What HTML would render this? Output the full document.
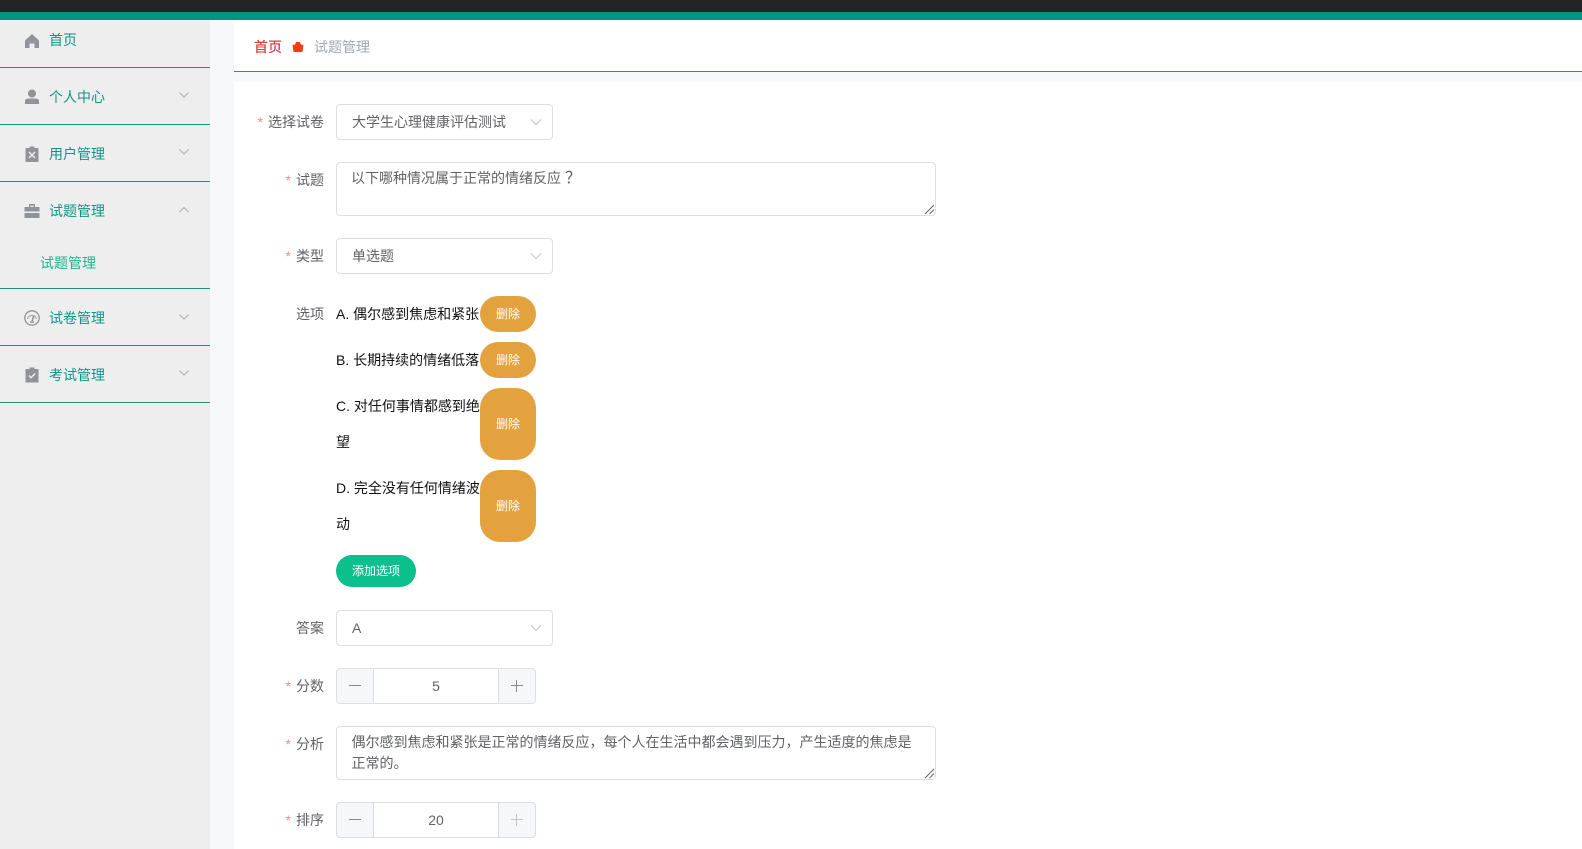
<!DOCTYPE html>
<html lang="zh-CN">
<head>
<meta charset="utf-8">
<title>试题管理</title>
<style>
html,body{margin:0;padding:0;background:#fff;}
body{width:1582px;height:849px;overflow:hidden;position:relative;font-family:"Liberation Sans","Noto Sans CJK SC",sans-serif;font-size:14px;color:#606266;}
.a{position:absolute;}
.t{position:absolute;white-space:nowrap;line-height:20px;height:20px;}
.menu{color:#0f9587;}
.hr{position:absolute;left:0;width:210px;height:1px;background:#1f8f7f;}
.lbl{position:absolute;right:1258px;white-space:nowrap;line-height:20px;height:20px;color:#606266;}
.lbl i{font-style:normal;color:#f08a8a;margin-right:5px;}
.box{position:absolute;box-sizing:border-box;border:1px solid #dcdfe6;border-radius:4px;background:#fff;}
.sel{left:336px;width:217px;height:36px;}
.sel span{position:absolute;left:15px;top:7px;line-height:20px;white-space:nowrap;}
.sel svg{position:absolute;right:10px;top:12px;}
.ta{left:336px;width:600px;height:54px;}
.ta svg{position:absolute;right:0;bottom:0;}
.opt{position:absolute;left:336px;width:144px;line-height:36px;color:#111;word-break:break-all;}
.del{position:absolute;left:480px;width:56px;background:#e4a23f;color:#fff;font-size:12px;text-align:center;border-radius:20px;}
.num{left:336px;width:200px;height:36px;}
.num b{position:absolute;top:0;height:34px;width:36px;background:#f5f7fa;}
.num b.m{left:0;border-right:1px solid #dcdfe6;border-radius:3px 0 0 3px;}
.num b.p{right:0;border-left:1px solid #dcdfe6;border-radius:0 3px 3px 0;}
.num b:before{content:"";position:absolute;left:12px;top:16px;width:12px;height:1px;background:#85888e;}
.num b.p:after{content:"";position:absolute;left:17px;top:11px;width:1px;height:12px;background:#85888e;}
.num b.d:before,.num b.d:after{background:#c0c4cc;}
.num span{position:absolute;left:37px;right:37px;top:7px;text-align:center;line-height:20px;}
</style>
</head>
<body>
<div class="a" style="left:0;top:0;width:1582px;height:12px;background:#232323"></div>
<div class="a" style="left:0;top:12px;width:1582px;height:8px;background:#069384"></div>

<!-- sidebar -->
<div class="a" style="left:0;top:20px;width:210px;height:829px;background:#eeeeee"></div>
<div class="a" style="left:210px;top:20px;width:24px;height:829px;background:#f6f8fa"></div>

<div class="hr" style="top:67px"></div>
<div class="hr" style="top:124px"></div>
<div class="hr" style="top:181px"></div>
<div class="hr" style="top:288px"></div>
<div class="hr" style="top:345px"></div>
<div class="hr" style="top:402px"></div>

<svg class="a" style="left:24px;top:33px" width="16" height="16" viewBox="0 0 16 16"><path fill="#909399" d="M8 1 L1 7.500 V15 H5.500 V10.500 H10.500 V15 H15 V7.500 Z"/></svg>
<div class="t menu" style="left:49px;top:30px">首页</div>

<svg class="a" style="left:24px;top:89px" width="16" height="16" viewBox="0 0 16 16"><circle cx="8" cy="4.500" r="4" fill="#909399"/><path fill="#909399" d="M1 15 V12.500 Q1 9.500 4 9.500 H12 Q15 9.500 15 12.500 V15 Z"/></svg>
<div class="t menu" style="left:49px;top:87px">个人中心</div>
<svg class="a" style="left:178px;top:91px" width="12" height="8" viewBox="0 0 12 8"><path d="M1.500 1.500 L6 6 L10.500 1.500" fill="none" stroke="#a8adb3" stroke-width="1"/></svg>

<svg class="a" style="left:25px;top:146px" width="14" height="16" viewBox="0 0 14 16"><path fill="#909399" fill-rule="evenodd" d="M0.500 2 H4.500 V0.500 H9.500 V2 H13.500 V16 H0.500 Z M3.500 6.500 L4.500 5.500 L7 8 L9.500 5.500 L10.500 6.500 L8 9 L10.500 11.500 L9.500 12.500 L7 10 L4.500 12.500 L3.500 11.500 L6 9 Z"/></svg>
<div class="t menu" style="left:49px;top:144px">用户管理</div>
<svg class="a" style="left:178px;top:148px" width="12" height="8" viewBox="0 0 12 8"><path d="M1.500 1.500 L6 6 L10.500 1.500" fill="none" stroke="#a8adb3" stroke-width="1"/></svg>

<svg class="a" style="left:24px;top:203px" width="16" height="16" viewBox="0 0 16 16"><path fill="#909399" fill-rule="evenodd" d="M5 4 V1 H11 V4 H15.500 V8.500 H0.500 V4 Z M6.500 2.500 V4 H9.500 V2.500 Z M0.500 10 H15.500 V15 H0.500 Z"/></svg>
<div class="t menu" style="left:49px;top:201px">试题管理</div>
<svg class="a" style="left:178px;top:206px" width="12" height="8" viewBox="0 0 12 8"><path d="M1.500 6 L6 1.500 L10.500 6" fill="none" stroke="#a8adb3" stroke-width="1"/></svg>

<div class="t" style="left:40px;top:253px;color:#1fb48c">试题管理</div>

<svg class="a" style="left:24px;top:310px" width="16" height="16" viewBox="0 0 16 16"><circle cx="8" cy="8" r="7.200" fill="none" stroke="#909399" stroke-width="1.300"/><path d="M3.500 9 A4.600 4.600 0 0 1 12.500 9" fill="none" stroke="#a9acb2" stroke-width="1.200"/><path d="M9.800 5.500 L8.200 11" stroke="#909399" stroke-width="1.500"/><path d="M6 12 H10" stroke="#909399" stroke-width="1.500"/></svg>
<div class="t menu" style="left:49px;top:308px">试卷管理</div>
<svg class="a" style="left:178px;top:313px" width="12" height="8" viewBox="0 0 12 8"><path d="M1.500 1.500 L6 6 L10.500 1.500" fill="none" stroke="#a8adb3" stroke-width="1"/></svg>

<svg class="a" style="left:25px;top:367px" width="14" height="16" viewBox="0 0 14 16"><path fill="#909399" fill-rule="evenodd" d="M0.500 2 H4.500 V0.500 H9.500 V2 H13.500 V15.500 H0.500 Z M3.500 9 L4.500 8 L6 9.800 L9.700 6 L10.700 7 L6 11.800 Z"/></svg>
<div class="t menu" style="left:49px;top:365px">考试管理</div>
<svg class="a" style="left:178px;top:369px" width="12" height="8" viewBox="0 0 12 8"><path d="M1.500 1.500 L6 6 L10.500 1.500" fill="none" stroke="#a8adb3" stroke-width="1"/></svg>

<!-- breadcrumb -->
<div class="a" style="left:234px;top:20px;width:1348px;height:51px;background:#fff"></div>
<div class="a" style="left:234px;top:71px;width:1348px;height:1px;background:#1f8f7f"></div>
<div class="a" style="left:234px;top:72px;width:1348px;height:10px;background:#f6f8fa"></div>
<div class="a" style="left:234px;top:82px;width:1348px;height:767px;background:#fff"></div>
<div class="t" style="left:254px;top:37px;color:#dc3f4a;font-weight:500">首页</div>
<svg class="a" style="left:292px;top:41px" width="12" height="12" viewBox="0 0 12 12"><path fill="#ee3f0c" d="M0.500 4 L3 3.500 L4.200 1 H7.800 L9 3.500 L11.500 4 L10.500 11 H1.500 Z"/></svg>
<div class="t" style="left:314px;top:37px;color:#a0a6b2">试题管理</div>

<!-- form -->
<div class="lbl" style="top:112px"><i>*</i>选择试卷</div>
<div class="box sel" style="top:104px"><span>大学生心理健康评估测试</span><svg width="12" height="10" viewBox="0 0 12 10"><path d="M1 2.500 L6 7.500 L11 2.500" fill="none" stroke="#c0c4cc" stroke-width="1"/></svg></div>

<div class="lbl" style="top:170px"><i>*</i>试题</div>
<div class="box ta" style="top:162px"><div class="t" style="left:14px;top:5px">以下哪种情况属于正常的情绪反应<span style="position:relative;left:4px;font-size:16px">？</span></div><svg width="12" height="12" viewBox="0 0 12 12"><path d="M2 11 L11 2 M6.500 11 L11 6.500" stroke="#666" stroke-width="1"/></svg></div>

<div class="lbl" style="top:246px"><i>*</i>类型</div>
<div class="box sel" style="top:238px"><span>单选题</span><svg width="12" height="10" viewBox="0 0 12 10"><path d="M1 2.500 L6 7.500 L11 2.500" fill="none" stroke="#c0c4cc" stroke-width="1"/></svg></div>

<div class="lbl" style="top:304px">选项</div>
<div class="opt" style="top:296px">A. 偶尔感到焦虑和紧张</div>
<div class="del" style="top:296px;height:36px;line-height:36px">删除</div>
<div class="opt" style="top:342px">B. 长期持续的情绪低落</div>
<div class="del" style="top:342px;height:36px;line-height:36px">删除</div>
<div class="opt" style="top:388px">C. 对任何事情都感到绝望</div>
<div class="del" style="top:388px;height:72px;line-height:72px">删除</div>
<div class="opt" style="top:470px">D. 完全没有任何情绪波动</div>
<div class="del" style="top:470px;height:72px;line-height:72px">删除</div>
<div class="a" style="left:336px;top:555px;width:80px;height:32px;line-height:32px;background:#0cc08e;color:#fff;font-size:12px;text-align:center;border-radius:16px">添加选项</div>

<div class="lbl" style="top:618px">答案</div>
<div class="box sel" style="top:610px"><span>A</span><svg width="12" height="10" viewBox="0 0 12 10"><path d="M1 2.500 L6 7.500 L11 2.500" fill="none" stroke="#c0c4cc" stroke-width="1"/></svg></div>

<div class="lbl" style="top:676px"><i>*</i>分数</div>
<div class="box num" style="top:668px"><b class="m"></b><span>5</span><b class="p"></b></div>

<div class="lbl" style="top:734px"><i>*</i>分析</div>
<div class="box ta" style="top:726px"><div class="a" style="left:14.500px;top:5px;width:570px;line-height:21px;word-break:break-all">偶尔感到焦虑和紧张是正常的情绪反应，每个人在生活中都会遇到压力，产生适度的焦虑是正常的。</div><svg width="12" height="12" viewBox="0 0 12 12"><path d="M2 11 L11 2 M6.500 11 L11 6.500" stroke="#666" stroke-width="1"/></svg></div>

<div class="lbl" style="top:810px"><i>*</i>排序</div>
<div class="box num" style="top:802px"><b class="m"></b><span>20</span><b class="p d"></b></div>
</body>
</html>
